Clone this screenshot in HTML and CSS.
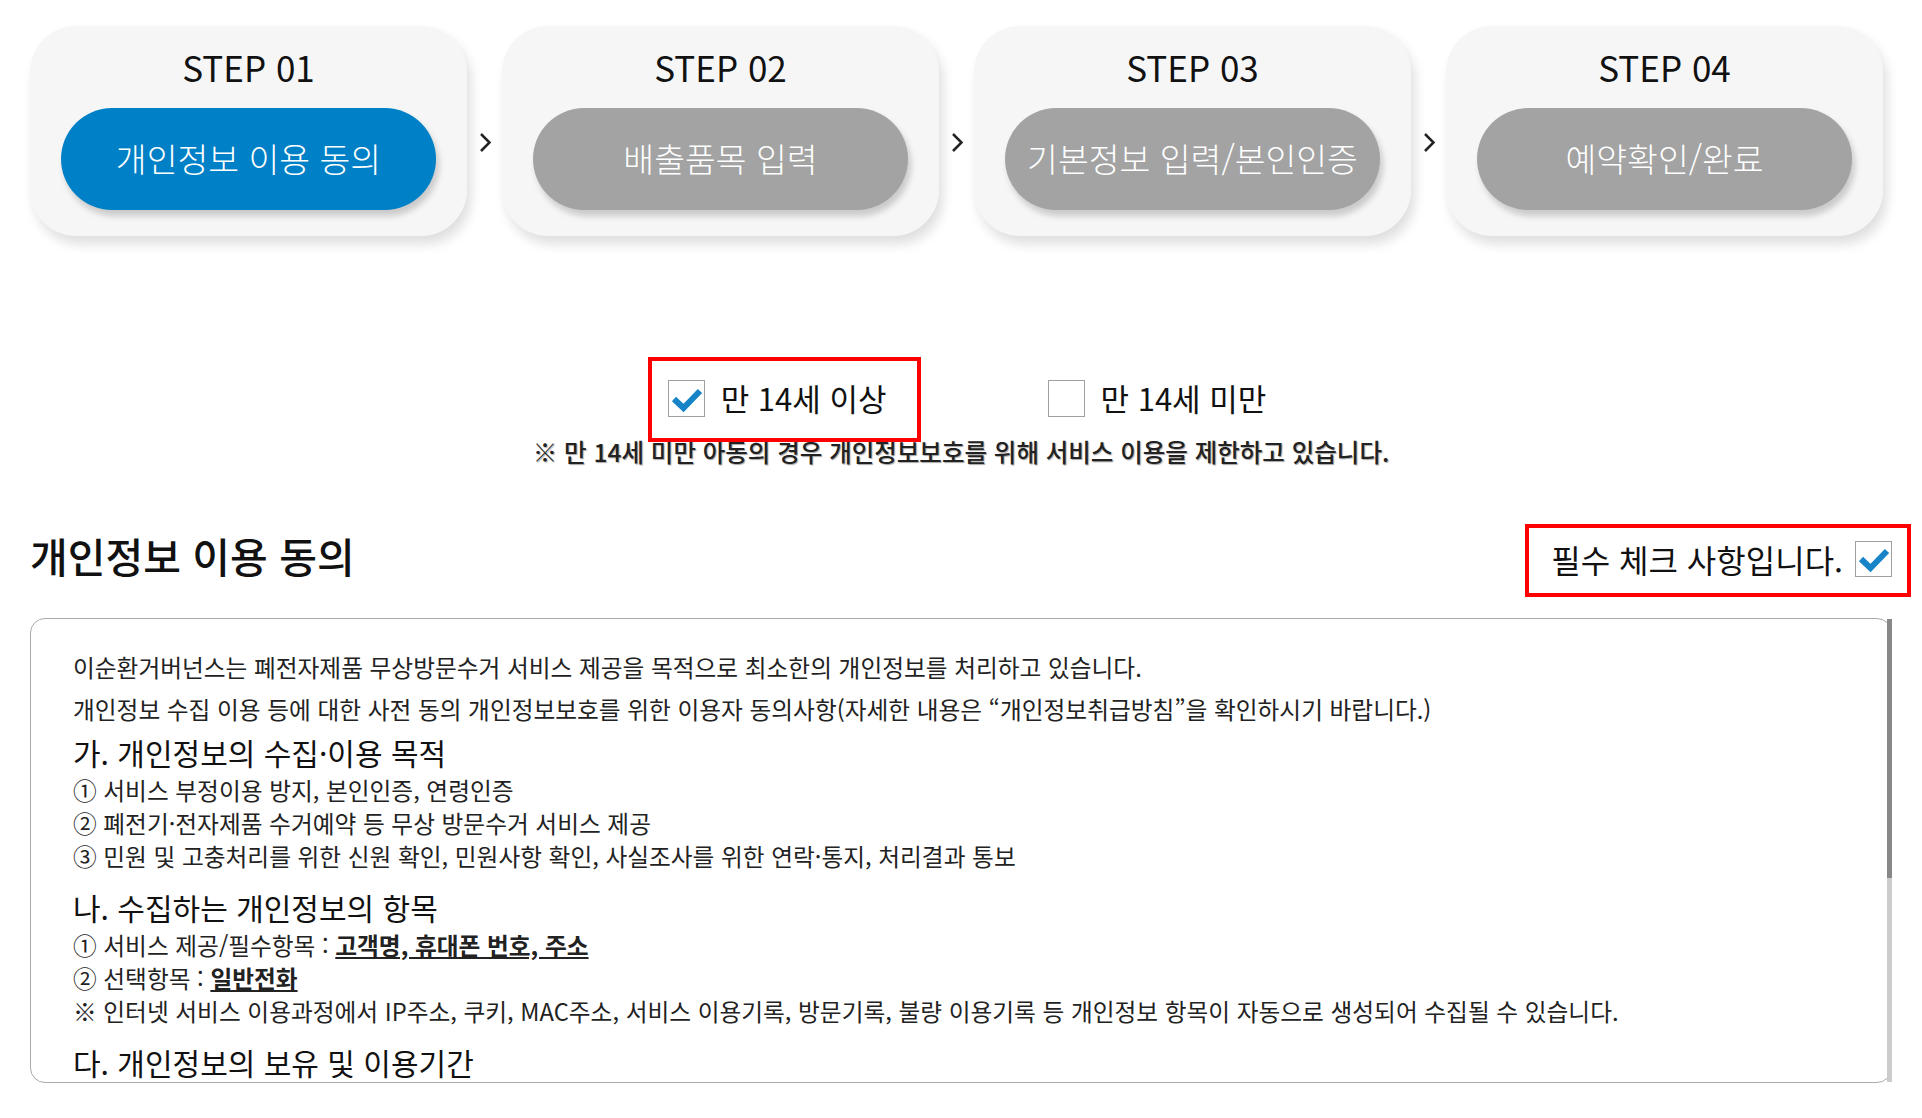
FILE: index.html
```html
<!DOCTYPE html>
<html lang="ko">
<head>
  <meta charset="UTF-8" />
  <meta name="viewport" content="width=device-width, initial-scale=1" />
  <title>개인정보 이용 동의</title>
  <link rel="stylesheet" href="styles.css">
</head>
<body>
  <div class="page">
    <!-- Step progress -->
    <ol class="steps">
      <li class="step">
        <p class="step-no">STEP 01</p>
        <span class="step-pill active">개인정보 이용 동의</span>
      </li>
      <li class="step-arrow">
        <svg width="12" height="21" viewBox="0 0 12 21"><polyline points="2,2 10.5,10.5 2,19" /></svg>
      </li>
      <li class="step">
        <p class="step-no">STEP 02</p>
        <span class="step-pill">배출품목 입력</span>
      </li>
      <li class="step-arrow">
        <svg width="12" height="21" viewBox="0 0 12 21"><polyline points="2,2 10.5,10.5 2,19" /></svg>
      </li>
      <li class="step">
        <p class="step-no">STEP 03</p>
        <span class="step-pill">기본정보 입력/본인인증</span>
      </li>
      <li class="step-arrow">
        <svg width="12" height="21" viewBox="0 0 12 21"><polyline points="2,2 10.5,10.5 2,19" /></svg>
      </li>
      <li class="step">
        <p class="step-no">STEP 04</p>
        <span class="step-pill">예약확인/완료</span>
      </li>
    </ol>

    <!-- Age check -->
    <div class="age-select">
      <label class="age-option">
        <span class="check">
          <svg width="35" height="35" viewBox="0 0 35 35"><polyline points="5,18 14.5,27 31,10" /></svg>
        </span>
        만 14세 이상
        <span class="highlight age-highlight"></span>
      </label>
      <label class="age-option">
        <span class="check"></span>
        만 14세 미만
      </label>
    </div>
    <p class="age-notice">※ 만 14세 미만 아동의 경우 개인정보보호를 위해 서비스 이용을 제한하고 있습니다.</p>

    <!-- Terms -->
    <div class="terms-head">
      <h2>개인정보 이용 동의</h2>
      <label class="required">
        필수 체크 사항입니다.
        <span class="check">
          <svg width="35" height="34" viewBox="0 0 35 34"><polyline points="5,17 14.5,26 31,9" /></svg>
        </span>
        <span class="highlight required-highlight"></span>
      </label>
    </div>

    <div class="terms-wrap">
      <div class="terms">
        <p class="intro">이순환거버넌스는 폐전자제품 무상방문수거 서비스 제공을 목적으로 최소한의 개인정보를 처리하고 있습니다.</p>
        <p class="intro">개인정보 수집 이용 등에 대한 사전 동의 개인정보보호를 위한 이용자 동의사항(자세한 내용은 “개인정보취급방침”을 확인하시기 바랍니다.)</p>

        <h3>가. 개인정보의 수집·이용 목적</h3>
        <ul>
          <li>① 서비스 부정이용 방지, 본인인증, 연령인증</li>
          <li>② 폐전기·전자제품 수거예약 등 무상 방문수거 서비스 제공</li>
          <li>③ 민원 및 고충처리를 위한 신원 확인, 민원사항 확인, 사실조사를 위한 연락·통지, 처리결과 통보</li>
        </ul>

        <h3>나. 수집하는 개인정보의 항목</h3>
        <ul>
          <li>① 서비스 제공/필수항목 : <strong>고객명, 휴대폰 번호, 주소</strong></li>
          <li>② 선택항목 : <strong>일반전화</strong></li>
          <li>※ 인터넷 서비스 이용과정에서 IP주소, 쿠키, MAC주소, 서비스 이용기록, 방문기록, 불량 이용기록 등 개인정보 항목이 자동으로 생성되어 수집될 수 있습니다.</li>
        </ul>

        <h3>다. 개인정보의 보유 및 이용기간</h3>
        <ul>
          <li>① 수집된 개인정보는 서비스 제공 목적이 달성된 후 지체 없이 파기합니다.</li>
          <li>② 단, 관계법령에 의해 보존할 필요가 있는 경우 해당 법령에서 정한 기간 동안 보관합니다.</li>
          <li>③ 수거예약 정보는 서비스 제공 완료 후 1년간 보관 후 파기합니다.</li>
        </ul>

        <h3>라. 동의를 거부할 권리 및 거부 시 불이익</h3>
        <ul>
          <li>① 이용자는 개인정보 수집·이용에 대한 동의를 거부할 권리가 있습니다.</li>
          <li>② 다만, 동의를 거부할 경우 무상방문수거 서비스 이용이 제한됩니다.</li>
        </ul>
      </div>
      <div class="scroll-track"><div class="scroll-thumb"></div></div>
    </div>
  </div>
</body>
</html>
```

FILE: styles.css
```css
/* Base */
body {
  margin: 0;
  background-color: #fff;
  color: #222;
  font-family: "Noto Sans CJK KR", "Noto Sans", sans-serif;
}

.page {
  width: 1862px;
  margin-left: 30px;
  padding-top: 26px;
}

/* Steps */
.steps {
  display: flex;
  align-items: flex-start;
  list-style: none;
  margin: 0;
  padding: 0;
}

.step {
  width: 437px;
  height: 210px;
  box-sizing: border-box;
  padding: 20px 31px 0;
  background-color: #f6f6f6;
  border-radius: 46px;
  box-shadow: 4px 8px 12px rgba(0, 0, 0, 0.13);
  text-align: center;
}

.step-no {
  margin: 0 0 20px;
  font-size: 35px;
  font-weight: 400;
  line-height: 42px;
  color: #111;
}

.step-pill {
  display: block;
  height: 102px;
  line-height: 100px;
  border-radius: 51px;
  background-color: #a3a3a3;
  color: #fff;
  font-size: 33.5px;
  font-weight: 300;
  box-shadow: 3px 6px 6px rgba(0, 0, 0, 0.18);
}

.step-pill.active {
  background-color: #0080c6;
}

.step-arrow {
  width: 35px;
  padding-top: 106px;
  display: flex;
  justify-content: center;
}

.step-arrow polyline {
  fill: none;
  stroke: #222;
  stroke-width: 2.5;
}

/* Checkboxes */
.check {
  display: flex;
  align-items: center;
  justify-content: center;
  width: 37px;
  height: 37px;
  box-sizing: border-box;
  border: 1px solid #a0a0a0;
  background-color: #fff;
}

.check polyline {
  fill: none;
  stroke: #1784c7;
  stroke-width: 6;
}

.highlight {
  position: absolute;
  border: 4px solid #f00;
  pointer-events: none;
}

/* Age select */
.age-select {
  display: flex;
  justify-content: center;
  gap: 161px;
  margin-top: 143px;
  padding-left: 12px;
}

.age-option {
  position: relative;
  display: flex;
  align-items: center;
  gap: 16px;
  font-size: 31px;
  line-height: 38px;
  color: #111;
}

.age-highlight {
  left: -20px;
  top: -22px;
  right: -34px;
  bottom: -25px;
}

.age-notice {
  margin: 18px 0 0;
  font-size: 24.5px;
  font-weight: 500;
  line-height: 34px;
  text-align: center;
  color: #222;
  text-shadow: 1px 1px 1px rgba(0, 0, 0, 0.35);
}

/* Terms header */
.terms-head {
  display: flex;
  justify-content: space-between;
  align-items: center;
  height: 56px;
  margin-top: 62px;
}

.terms-head h2 {
  margin: 0;
  padding-bottom: 8px;
  font-size: 41px;
  font-weight: 500;
  line-height: 56px;
  color: #111;
}

.required {
  position: relative;
  display: flex;
  align-items: center;
  gap: 12px;
  font-size: 32px;
  line-height: 36px;
  color: #111;
}

.required .check {
  height: 36px;
}

.required-highlight {
  left: -26px;
  top: -17px;
  right: -19px;
  bottom: -20px;
}

/* Terms box */
.terms-wrap {
  position: relative;
  margin-top: 31px;
}

.terms {
  height: 465px;
  box-sizing: border-box;
  padding: 31px 42px 30px;
  border: 1px solid #aaa;
  border-radius: 15px;
  overflow: hidden;
  font-size: 23.7px;
}

.scroll-track {
  position: absolute;
  top: 1px;
  right: 0;
  bottom: 1px;
  width: 5px;
  background-color: #ccc;
}

.scroll-thumb {
  height: 259px;
  background-color: #888;
}

.terms .intro {
  margin: 0 0 8px;
  line-height: 34px;
}

.terms h3 {
  margin: -2px 0 2px;
  font-size: 30px;
  font-weight: 400;
  line-height: 40px;
  color: #111;
}

.terms ul {
  list-style: none;
  margin: 0 0 16px;
  padding: 0;
  line-height: 33px;
}

.terms strong {
  font-weight: 700;
  text-decoration: underline;
}
```
